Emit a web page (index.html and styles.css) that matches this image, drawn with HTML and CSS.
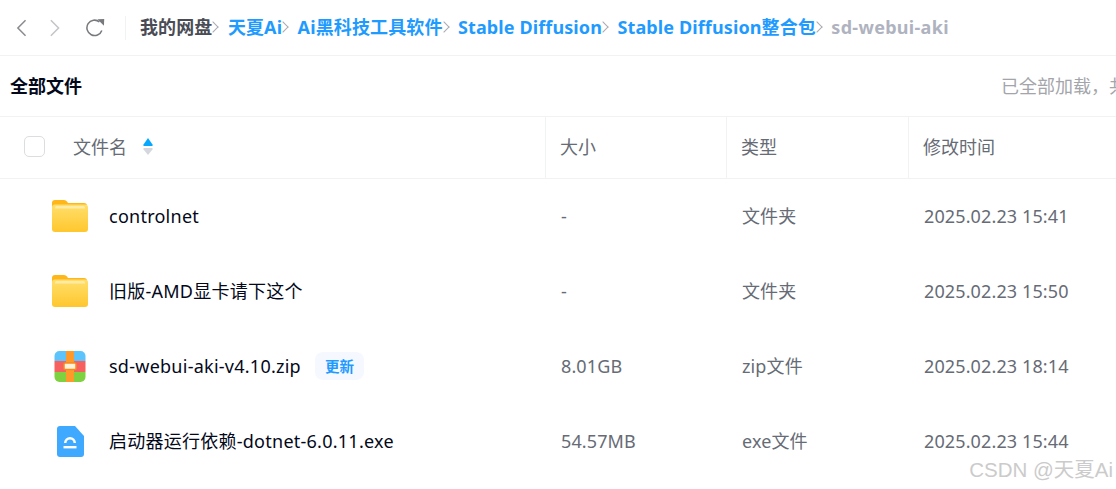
FILE: index.html
```html
<!DOCTYPE html>
<html lang="en">
<head>
    <meta charset="UTF-8">
    <title>sd-webui-aki</title>
    <link rel="stylesheet" href="styles.css">
</head>
<body>

<div class="page">
    <div class="topbar">
        <div class="nav-btns">
            <svg class="nav-icon" width="14" height="20" viewBox="0 0 14 20"><path d="M11 2 3 10l8 8" fill="none" stroke="#8a8c90" stroke-width="1.6"/></svg>
            <svg class="nav-icon" width="14" height="20" viewBox="0 0 14 20"><path d="M3 2l8 8-8 8" fill="none" stroke="#c4c5c8" stroke-width="1.6"/></svg>
            <svg class="nav-icon" width="20" height="20" viewBox="0 0 20 20"><path d="M16.5 12.5A8 8 0 1 1 14 3.6" fill="none" stroke="#77797d" stroke-width="1.6"/><path d="M12 1l7-.3-.3 7z" fill="#77797d"/></svg>
        </div>
        <div class="crumbs">
            <span class="crumb root">我的网盘</span><span class="sep"></span>
            <span class="crumb">天夏Ai</span><span class="sep"></span>
            <span class="crumb">Ai黑科技工具软件</span><span class="sep"></span>
            <span class="crumb">Stable Diffusion</span><span class="sep"></span>
            <span class="crumb">Stable Diffusion整合包</span><span class="sep"></span>
            <span class="crumb current">sd-webui-aki</span>
        </div>
    </div>

    <div class="toolbar">
        <div class="list-title">全部文件</div>
        <div class="summary">已全部加载，共4项</div>
    </div>

    <div class="row head">
        <div class="cell name-cell">
            <span class="checkbox"></span>
            <span>文件名</span>
            <svg class="sort" width="10" height="18" viewBox="0 0 10 18"><path d="M5 0 9.5 6.500Q10 8 9 8H1Q0 8 .5 6.500z" fill="#06a7ff"/><path d="M1 10h8q1 0 .5 1.500L5 17 .5 11.500Q0 10 1 10z" fill="#d4d7de"/></svg>
        </div>
        <div class="cell">大小</div>
        <div class="cell">类型</div>
        <div class="cell">修改时间</div>
    </div>

    <div class="row">
        <div class="cell name-cell">
            <svg class="file-icon" width="38" height="34" viewBox="0 0 38 34"><use href="#folder"/></svg>
            <span class="file-name">controlnet</span>
        </div>
        <div class="cell">-</div>
        <div class="cell">文件夹</div>
        <div class="cell">2025.02.23 15:41</div>
    </div>
    <div class="row">
        <div class="cell name-cell">
            <svg class="file-icon" width="38" height="34" viewBox="0 0 38 34"><use href="#folder"/></svg>
            <span class="file-name">旧版-AMD显卡请下这个</span>
        </div>
        <div class="cell">-</div>
        <div class="cell">文件夹</div>
        <div class="cell">2025.02.23 15:50</div>
    </div>
    <div class="row">
        <div class="cell name-cell">
            <svg class="file-icon" width="38" height="34" viewBox="0 0 38 34">
                <defs><clipPath id="zipclip"><rect x="3.500" y="2" width="31" height="31" rx="5"/></clipPath></defs>
                <g clip-path="url(#zipclip)">
                    <rect x="3" y="2" width="32" height="10" fill="#5cc4fb"/>
                    <rect x="3" y="12" width="32" height="11" fill="#f6605f"/>
                    <rect x="3" y="23" width="32" height="10" fill="#7fd23f"/>
                    <rect x="15" y="2" width="8" height="31" fill="#ff9a2a"/>
                </g>
                <rect x="13" y="14" width="12" height="6.500" rx="1" fill="#fff3dc" stroke="#f58a1f" stroke-width="1.500"/>
            </svg>
            <span class="file-name">sd-webui-aki-v4.10.zip</span>
            <span class="badge">更新</span>
        </div>
        <div class="cell">8.01GB</div>
        <div class="cell">zip文件</div>
        <div class="cell">2025.02.23 18:14</div>
    </div>
    <div class="row">
        <div class="cell name-cell">
            <svg class="file-icon" width="38" height="34" viewBox="0 0 38 34">
                <path d="M8 2h15l9 10v18q0 3-3 3H8q-3 0-3-3V5q0-3 3-3z" transform="translate(1 0)" fill="#3fa9ff"/>
                <path d="M13 19a6 6 0 0 1 12 0h-2.500a3.500 3.500 0 0 0-7 0z" fill="#fff"/>
                <rect x="12.500" y="22" width="13" height="2.400" fill="#fff"/>
            </svg>
            <span class="file-name">启动器运行依赖-dotnet-6.0.11.exe</span>
        </div>
        <div class="cell">54.57MB</div>
        <div class="cell">exe文件</div>
        <div class="cell">2025.02.23 15:44</div>
    </div>

    <div class="watermark">CSDN @天夏Ai</div>
</div>

<svg width="0" height="0" class="defs">
    <defs>
        <linearGradient id="folderFront" x1="0" y1="0" x2="0" y2="1">
            <stop offset="0" stop-color="#ffdf6b"/>
            <stop offset="1" stop-color="#ffc72e"/>
        </linearGradient>
        <symbol id="folder" viewBox="0 0 38 34">
            <path d="M4 1h9q2 0 3 1.500l1 1.500h16q3 0 3 3v4H1V4q0-3 3-3z" fill="#ffb618"/>
            <rect x="1" y="5.500" width="36" height="27.500" rx="3" fill="url(#folderFront)"/>
            <path d="M4 8.500q0-1.500 1.500-1.500h27q1.500 0 1.500 1.500V9.500H4z" fill="#ffeaa6"/>
        </symbol>
    </defs>
</svg>

</body>
</html>
```

FILE: styles.css
```css
* { margin: 0; padding: 0; box-sizing: border-box; }

body { background-color: #fff; overflow: hidden; font-family: "Noto Sans", "Noto Sans CJK SC", sans-serif; color: #03081a; }

.page { width: 1116px; height: 489px; position: relative; overflow: hidden; }

.defs { display: block; height: 0; }

/* top path bar */
.topbar { height: 56px; display: flex; align-items: center; border-bottom: 1px solid #f1f2f4; }

.nav-btns { display: flex; align-items: center; width: 126px; height: 24px; padding-left: 15px; border-right: 1px solid #f1f2f4; }
.nav-icon { display: block; margin-right: 20px; }
.nav-icon:nth-child(2) { margin-right: 24px; }

.crumbs { display: flex; align-items: center; padding: 0 0 2px 14px; white-space: nowrap; font-size: 18px; font-weight: 700; line-height: 24px; letter-spacing: .12px; }
.crumb { color: #1f9bff; }
.crumb.root { color: #4a4c55; }
.crumb.current { color: #afb3bf; letter-spacing: .3px; }
.sep { width: 8px; height: 8px; margin: 0 10.400px 0 -3px; border-top: 1px solid #a9abb0; border-right: 1px solid #a9abb0; transform: rotate(45deg); }

/* list title */
.toolbar { height: 61px; display: flex; align-items: center; padding-left: 10px; border-bottom: 1px solid #f1f2f4; white-space: nowrap; line-height: 24px; }
.list-title { width: 991px; flex-shrink: 0; font-size: 18px; font-weight: 700; color: #03081a; }
.summary { flex-shrink: 0; font-size: 18px; color: #a3a5aa; }

/* table rows */
.row { height: 75px; display: grid; grid-template-columns: 545px 181px 182px 208px; line-height: 24px; }
.row.head { height: 62px; border-bottom: 1px solid #f1f2f4; }

.cell { display: flex; align-items: center; padding: 0 0 2px 16px; font-size: 18px; letter-spacing: .12px; color: #666b75; white-space: nowrap; }
.head .cell { border-left: 1px solid #f1f2f4; padding-left: 14px; letter-spacing: 0; }
.head .name-cell { border-left: 0; padding-left: 24px; }

.name-cell { padding-left: 51px; }

.checkbox { width: 21px; height: 21px; margin-right: 28px; border: 1px solid #dcdde0; border-radius: 5px; }
.sort { margin-left: 16px; }

.file-icon { flex-shrink: 0; margin-right: 20px; }
.file-name { color: #03081a; letter-spacing: .25px; }

.badge { margin-left: 14px; padding: 0 10px; height: 28px; line-height: 28px; border-radius: 8px; background-color: #f5f8ff; color: #1f9bff; font-size: 14.500px; font-weight: 700; letter-spacing: 0; }

.watermark { position: absolute; right: 3px; bottom: 6px; font-family: "Liberation Sans", "Noto Sans CJK SC", sans-serif; font-size: 20.500px; color: #cbcbcb; }
```
